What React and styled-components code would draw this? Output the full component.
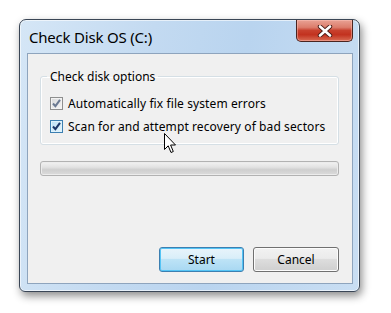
import React from 'react'
import styled, { createGlobalStyle } from 'styled-components'

const GlobalStyle = createGlobalStyle`
  html, body {
    margin: 0;
    padding: 0;
    background: #ffffff;
  }
  body {
    font-family: "Noto Sans", "Open Sans", "Liberation Sans", sans-serif;
  }
`

const Desktop = styled.div`
  position: relative;
  width: 391px;
  height: 313px;
  padding: 19px 0 0 19px;
  box-sizing: border-box;
`

const Window = styled.div`
  width: 341px;
  height: 273px;
  box-sizing: border-box;
  border: 1px solid #3a4656;
  border-radius: 7px 7px 6px 6px;
  background: linear-gradient(100deg, #d5e6f6 0%, #c3daf1 35%, #b9d4ef 60%, #c9def3 100%);
  box-shadow: 2px 4px 9px rgba(0, 0, 0, 0.45), inset 0 0 0 1px rgba(255, 255, 255, 0.6);
  display: flex;
  flex-direction: column;
`

const TitleBar = styled.div`
  height: 33px;
  display: flex;
  align-items: flex-start;
  justify-content: space-between;
  flex-shrink: 0;
`

const Title = styled.div`
  font-size: 15px;
  color: #000;
  padding: 8px 0 0 9px;
  line-height: 18px;
  letter-spacing: -0.2px;
`

const CloseButton = styled.div`
  width: 57px;
  height: 22px;
  margin-right: 6px;
  box-sizing: border-box;
  border: 1px solid #4a2420;
  border-top: none;
  border-radius: 0 0 5px 5px;
  background: linear-gradient(#e9a294 0%, #dc7d6c 35%, #c8402d 50%, #c2321f 70%, #d96c54 100%);
  box-shadow: inset 0 0 0 1px rgba(255, 200, 190, 0.45);
  display: flex;
  align-items: center;
  justify-content: center;
`

const Client = styled.div`
  flex: 1;
  margin: 0 6px 7px 7px;
  border: 1px solid #8ea4bd;
  background: #f0f0f0;
  display: flex;
  flex-direction: column;
  padding: 15px 13px 11px 12px;
`

const Group = styled.fieldset`
  margin: 0;
  padding: 0;
  border: 1px solid #d5dfe5;
  border-radius: 3px;
  box-shadow: inset 0 0 0 1px #fff;
`

const Legend = styled.legend`
  margin-left: 6px;
  padding: 0 3px;
  font-size: 12px;
  line-height: 15px;
  color: #000;
`

const Options = styled.div`
  padding: 8px 0 6px 9px;
  display: flex;
  flex-direction: column;
`

const Row = styled.div`
  height: 23px;
  display: flex;
  align-items: center;
  gap: 5px;
  font-size: 12px;
  letter-spacing: 0.1px;
  color: #000;
`

const Box = styled.div`
  width: 13px;
  height: 13px;
  box-sizing: border-box;
  border: 1px solid ${({ $hover }) => ($hover ? '#3c7fb1' : '#8e8f8f')};
  background: ${({ $hover }) =>
    $hover
      ? 'linear-gradient(135deg, #b9dff5, #e6f5fd)'
      : 'linear-gradient(135deg, #d8d9da, #f6f6f6)'};
  box-shadow: inset 0 0 0 1px ${({ $hover }) => ($hover ? '#def2fc' : '#f3f3f3')};
  display: flex;
  align-items: center;
  justify-content: center;
`

const Progress = styled.div`
  margin-top: 16px;
  height: 15px;
  box-sizing: border-box;
  border: 1px solid #b2b2b2;
  border-radius: 3px;
  background: linear-gradient(#f3f3f3 0%, #e2e2e2 40%, #cfcfcf 60%, #dcdcdc 100%);
  box-shadow: inset 0 0 0 1px #ececec;
`

const Spacer = styled.div`
  flex: 1;
`

const Buttons = styled.div`
  display: flex;
  justify-content: flex-end;
  gap: 9px;
`

const Button = styled.div`
  width: ${({ $w }) => $w}px;
  height: 25px;
  box-sizing: border-box;
  border-radius: 3px;
  border: 1px solid ${({ $primary }) => ($primary ? '#3c7fb1' : '#707070')};
  background: ${({ $primary }) =>
    $primary
      ? 'linear-gradient(#e8f4fb 0%, #d9eef9 45%, #bde3f6 50%, #a8d8f2 100%)'
      : 'linear-gradient(#f2f2f2 0%, #ebebeb 45%, #dddddd 50%, #cfcfcf 100%)'};
  box-shadow: inset 0 0 0 1px ${({ $primary }) => ($primary ? '#54c4f5' : '#fcfcfc')};
  display: flex;
  align-items: center;
  justify-content: center;
  font-size: 12px;
  color: #000;
`

const Cursor = styled.svg`
  position: absolute;
  left: 164px;
  top: 133px;
`

const Check = ({ color }) => (
  <svg width="9" height="9" viewBox="0 0 9 9">
    <path d="M1 4.5 L3.4 7.2 L8 0.8" fill="none" stroke={color} strokeWidth="2" />
  </svg>
)

const CloseGlyph = () => (
  <svg width="16" height="12" viewBox="0 0 16 12">
    <path d="M3 1.5 L13 10.5 M13 1.5 L3 10.5" stroke="#4a1c16" strokeWidth="4.4" strokeLinecap="round" />
    <path d="M3 1.5 L13 10.5 M13 1.5 L3 10.5" stroke="#ffffff" strokeWidth="2.6" strokeLinecap="round" />
  </svg>
)

export default function App() {
  return (
    <>
      <GlobalStyle />
      <Desktop>
        <Window>
          <TitleBar>
            <Title>Check Disk OS (C:)</Title>
            <CloseButton>
              <CloseGlyph />
            </CloseButton>
          </TitleBar>
          <Client>
            <Group>
              <Legend>Check disk options</Legend>
              <Options>
                <Row>
                  <Box>
                    <Check color="#6b7a92" />
                  </Box>
                  Automatically fix file system errors
                </Row>
                <Row>
                  <Box $hover>
                    <Check color="#1a3668" />
                  </Box>
                  Scan for and attempt recovery of bad sectors
                </Row>
              </Options>
            </Group>
            <Progress />
            <Spacer />
            <Buttons>
              <Button $primary $w={85}>Start</Button>
              <Button $w={86}>Cancel</Button>
            </Buttons>
          </Client>
        </Window>
        <Cursor width="13" height="21" viewBox="0 0 13 21">
          <path d="M0.5 0.5 L0.5 16.5 L4.2 12.8 L7 19.5 L9.3 18.5 L6.6 12 L11.5 12 Z" fill="#fff" stroke="#000" strokeWidth="1" strokeLinejoin="round" />
        </Cursor>
      </Desktop>
    </>
  )
}
